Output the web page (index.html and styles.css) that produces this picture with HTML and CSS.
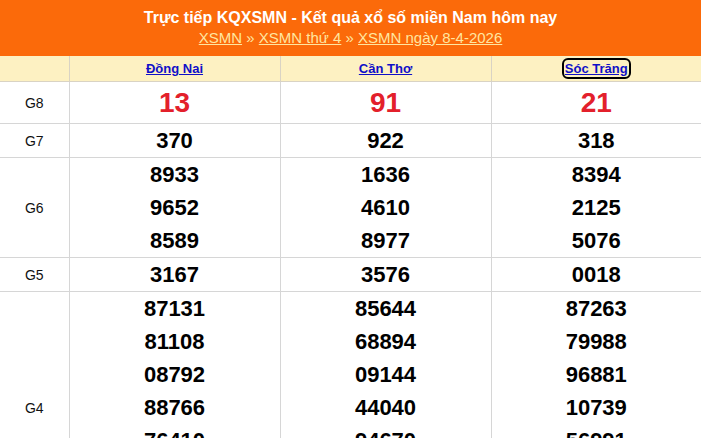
FILE: index.html
```html
<!DOCTYPE html>
<html lang="vi">
<head>
<meta charset="utf-8">
<title>XSMN</title>
<link rel="stylesheet" href="styles.css">
</head>
<body>
<div class="box">
  <div class="head">
    <h2 class="title">Trực tiếp KQXSMN - Kết quả xổ số miền Nam hôm nay</h2>
    <div class="crumbs"><a href="#">XSMN</a> » <a href="#">XSMN thứ 4</a> » <a href="#">XSMN ngày 8-4-2026</a></div>
  </div>
  <table class="kq">
    <colgroup><col class="c0"><col class="c1"><col class="c1"><col class="c2"></colgroup>
    <thead>
      <tr><th></th><th><a href="#">Đồng Nai</a></th><th><a href="#">Cần Thơ</a></th><th><a href="#" class="focus">Sóc Trăng</a></th></tr>
    </thead>
    <tbody>
      <tr class="g8"><td class="lb">G8</td><td><div class="n red">13</div></td><td><div class="n red">91</div></td><td><div class="n red">21</div></td></tr>
      <tr><td class="lb">G7</td><td><div class="n">370</div></td><td><div class="n">922</div></td><td><div class="n">318</div></td></tr>
      <tr><td class="lb">G6</td>
        <td><div class="n">8933</div><div class="n">9652</div><div class="n">8589</div></td>
        <td><div class="n">1636</div><div class="n">4610</div><div class="n">8977</div></td>
        <td><div class="n">8394</div><div class="n">2125</div><div class="n">5076</div></td></tr>
      <tr><td class="lb">G5</td><td><div class="n">3167</div></td><td><div class="n">3576</div></td><td><div class="n">0018</div></td></tr>
      <tr><td class="lb">G4</td>
        <td><div class="n">87131</div><div class="n">81108</div><div class="n">08792</div><div class="n">88766</div><div class="n">76410</div><div class="n">31520</div><div class="n">62054</div></td>
        <td><div class="n">85644</div><div class="n">68894</div><div class="n">09144</div><div class="n">44040</div><div class="n">94670</div><div class="n">22913</div><div class="n">50386</div></td>
        <td><div class="n">87263</div><div class="n">79988</div><div class="n">96881</div><div class="n">10739</div><div class="n">56991</div><div class="n">43177</div><div class="n">02865</div></td></tr>
    </tbody>
  </table>
</div>
</body>
</html>
```
FILE: styles.css
```css
html, body {
  margin: 0;
  padding: 0;
  background: #ffffff;
  font-family: "Liberation Sans", Arial, sans-serif;
}
.box {
  width: 701px;
}
.head {
  background: #fb6a0a;
  height: 56px;
  box-sizing: border-box;
  padding-top: 8px;
  text-align: center;
}
.title {
  margin: 0;
  color: #ffffff;
  font-size: 16px;
  font-weight: bold;
  line-height: 20px;
}
.crumbs {
  color: #ffe6a0;
  font-size: 15px;
  line-height: 20px;
}
.crumbs a {
  color: #ffe6a0;
  text-decoration: underline;
}
.kq {
  width: 701px;
  border-collapse: collapse;
  table-layout: fixed;
}
.c0 { width: 69px; }
.c1 { width: 211px; }
.c2 { width: 210px; }
.kq th {
  background: #fdf1c2;
  height: 25px;
  padding: 0;
  font-size: 13px;
  font-weight: bold;
  text-align: center;
  border-left: 1px solid #d9d3c4;
  border-bottom: 1px solid #d9d3c4;
}
.kq th:first-child { border-left: none; }
.kq th a {
  color: #0f0fc8;
  text-decoration: underline;
}
.kq th a.focus {
  outline: 2px solid #000000;
  outline-offset: 1px;
  border-radius: 3px;
}
.kq td {
  padding: 0;
  text-align: center;
  vertical-align: middle;
  border-left: 1px solid #d6d6d6;
  border-bottom: 1px solid #d6d6d6;
}
.kq td:first-child { border-left: none; }
.lb {
  font-size: 14px;
  color: #111111;
}
.n {
  font-size: 22px;
  font-weight: bold;
  line-height: 33px;
  color: #000000;
}
.g8 td { height: 41px; }
.n.red {
  color: #e3202b;
  font-size: 28px;
  line-height: 41px;
}
```
